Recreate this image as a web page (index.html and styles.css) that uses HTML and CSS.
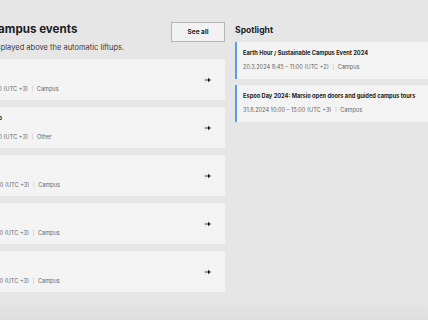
FILE: index.html
```html
<!DOCTYPE html>
<html lang="en">
<head>
<meta charset="utf-8">
<title>Campus events</title>
<link rel="stylesheet" href="styles.css">
</head>
<body>
<div class="page">
  <section class="main">
    <div class="main-head">
      <div>
        <h2 class="main-title">Campus events</h2>
        <p class="main-sub">Displayed above the automatic liftups.</p>
      </div>
      <button class="see-all">See all</button>
    </div>
    <ul class="event-list">
      <li class="event-card">
        <div class="event-text">
          <div class="event-title">Earth Hour</div>
          <div class="event-meta">20.3.2024 8:45 – 11:00 (UTC +3)<span class="sep">|</span>Campus</div>
        </div>
        <svg class="arrow" viewBox="0 0 10 10" width="8" height="8"><path d="M1 5h6" stroke="#222" stroke-width="1.1"/><path d="M5 2.2L8.6 5 5 7.8z" fill="#222"/></svg>
      </li>
      <li class="event-card">
        <div class="event-text">
          <div class="event-title">Tech Days Workshop</div>
          <div class="event-meta">21.3.2024 9:00 – 12:00 (UTC +3)<span class="sep">|</span>Other</div>
        </div>
        <svg class="arrow" viewBox="0 0 10 10" width="8" height="8"><path d="M1 5h6" stroke="#222" stroke-width="1.1"/><path d="M5 2.2L8.6 5 5 7.8z" fill="#222"/></svg>
      </li>
      <li class="event-card">
        <div class="event-text">
          <div class="event-title">Open Doors</div>
          <div class="event-meta">22.3.2024 9:00 – 14:00 (UTC +3)<span class="sep">|</span>Campus</div>
        </div>
        <svg class="arrow" viewBox="0 0 10 10" width="8" height="8"><path d="M1 5h6" stroke="#222" stroke-width="1.1"/><path d="M5 2.2L8.6 5 5 7.8z" fill="#222"/></svg>
      </li>
      <li class="event-card">
        <div class="event-text">
          <div class="event-title">Guided Tour</div>
          <div class="event-meta">23.3.2024 9:00 – 13:00 (UTC +3)<span class="sep">|</span>Campus</div>
        </div>
        <svg class="arrow" viewBox="0 0 10 10" width="8" height="8"><path d="M1 5h6" stroke="#222" stroke-width="1.1"/><path d="M5 2.2L8.6 5 5 7.8z" fill="#222"/></svg>
      </li>
      <li class="event-card">
        <div class="event-text">
          <div class="event-title">Espoo Day</div>
          <div class="event-meta">20.3.2024 9:00 – 12:00 (UTC +3)<span class="sep">|</span>Campus</div>
        </div>
        <svg class="arrow" viewBox="0 0 10 10" width="8" height="8"><path d="M1 5h6" stroke="#222" stroke-width="1.1"/><path d="M5 2.2L8.6 5 5 7.8z" fill="#222"/></svg>
      </li>
    </ul>
  </section>
  <aside class="side">
    <h3 class="side-title">Spotlight</h3>
    <ul class="spot-list">
      <li class="spot-card">
        <div class="spot-title">Earth Hour / Sustainable Campus Event 2024</div>
        <div class="spot-meta">20.3.2024 8:45 – 11:00 (UTC +2)<span class="sep">|</span>Campus</div>
      </li>
      <li class="spot-card">
        <div class="spot-title">Espoo Day 2024: Marsio open doors and guided campus tours</div>
        <div class="spot-meta">31.8.2024 10:00 – 15:00 (UTC +3)<span class="sep">|</span>Campus</div>
      </li>
    </ul>
  </aside>
</div>
</body>
</html>
```

FILE: styles.css
```css
html, body {
  margin: 0;
  padding: 0;
}
body {
  width: 428px;
  height: 320px;
  overflow: hidden;
  background: linear-gradient(to bottom, #e6e6e6 0, #e6e6e6 300px, #dedede 320px);
  font-family: Inter, "Noto Sans", sans-serif;
  color: #222;
}
.page {
  display: flex;
  gap: 10px;
  margin-left: -68px;
  padding-top: 22px;
}
.main {
  width: 293px;
  flex: none;
}
.main-head {
  display: flex;
  justify-content: space-between;
  align-items: flex-start;
  padding-left: 57.5px;
}
.main-title {
  margin: 0;
  font-size: 11.6px;
  line-height: 14px;
  font-weight: 700;
  color: #1e1e1e;
}
.main-sub {
  margin: 7px 0 0;
  font-size: 7.5px;
  line-height: 10px;
  color: #3a3a3a;
}
.see-all {
  width: 54px;
  height: 20px;
  padding: 0;
  border: 1px solid #b5b5b5;
  background: #f2f2f2;
  font-family: inherit;
  font-size: 6.5px;
  font-weight: 700;
  color: #222;
}
.event-list {
  list-style: none;
  margin: 6px 0 0;
  padding: 0;
  display: flex;
  flex-direction: column;
  gap: 7px;
}
.event-card {
  height: 41px;
  box-sizing: border-box;
  background: #f3f3f3;
  display: flex;
  align-items: center;
  justify-content: space-between;
  padding: 0 13px 0 10px;
}
.event-text {
  display: flex;
  flex-direction: column;
  gap: 10.5px;
}
.event-title {
  font-size: 5.8px;
  font-weight: 700;
  line-height: 8px;
}
.event-meta, .spot-meta {
  font-size: 5.6px;
  line-height: 8px;
  color: #666;
}
.sep {
  color: #bbb;
  margin: 0 3.5px;
}
.arrow {
  display: block;
}
.side {
  width: 260px;
  flex: none;
}
.side-title {
  margin: 0;
  padding-top: 2px;
  font-size: 8.6px;
  line-height: 12px;
  font-weight: 700;
  color: #1e1e1e;
}
.spot-list {
  list-style: none;
  margin: 6px 0 0;
  padding: 0;
  display: flex;
  flex-direction: column;
  gap: 6px;
}
.spot-card {
  height: 37px;
  box-sizing: border-box;
  background: #f3f3f3;
  border-left: 2px solid #5a9bf0;
  padding: 7px 0 0 6px;
  display: flex;
  flex-direction: column;
  gap: 5.5px;
}
.spot-title {
  font-size: 5.7px;
  line-height: 8px;
  font-weight: 700;
  color: #222;
}
```
